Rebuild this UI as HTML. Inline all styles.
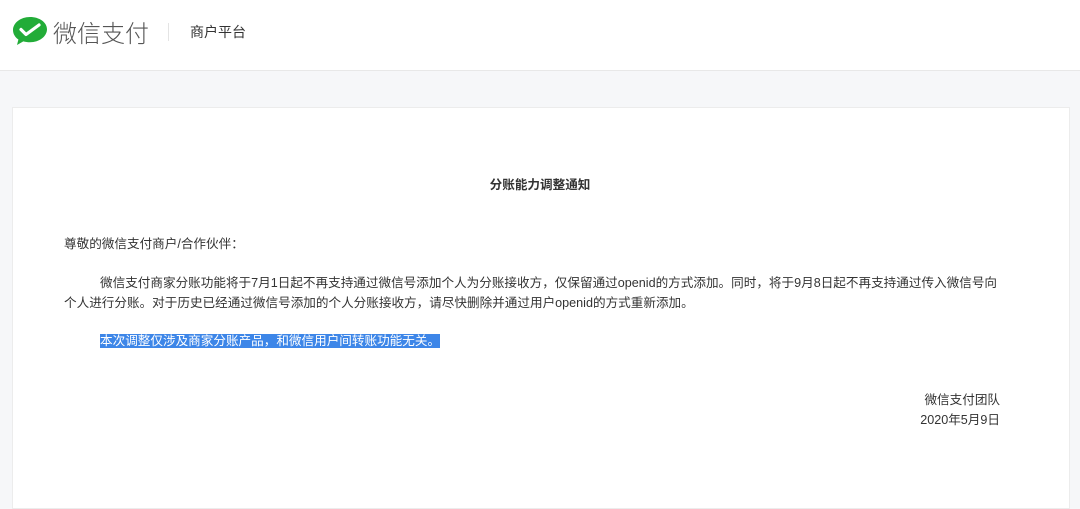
<!DOCTYPE html>
<html><head><meta charset="utf-8"><style>
html,body{margin:0;padding:0;width:1080px;height:494px;overflow:hidden;background:#f6f7f9;font-family:"Liberation Sans","Microsoft YaHei","Noto Sans CJK SC",sans-serif;}
.hd{position:absolute;left:0;top:0;width:1080px;height:70px;background:#fff;border-bottom:1px solid #e8e8e8;}
.logo{position:absolute;left:12px;top:16px;}
.brand{position:absolute;left:53px;top:14px;font-size:24px;color:#555;letter-spacing:0px;font-family:"Noto Sans CJK SC",sans-serif;font-weight:300}
.sep{position:absolute;left:168px;top:23px;width:1px;height:18px;background:#e4e4e4}
.sub{position:absolute;left:190px;top:22px;font-size:14px;color:#333}
.card{position:absolute;left:12px;top:107px;width:1056px;height:400px;background:#fff;border:1px solid #ececec;}
.t{position:absolute;font-size:12.6px;color:#333;white-space:nowrap;line-height:20px}
.hl{background:#3d86e8;color:#fff}
</style></head><body>
<div class="hd">
<svg class="logo" width="36" height="30" viewBox="0 0 36 30"><path d="M18 1C8.6 1 1 7 1 14c0 3.8 2 7.2 5.4 9.5L5 29l6.3-3.6c2.1.6 4.3.9 6.7.9 9.4 0 17-6 17-13S27.4 1 18 1z" fill="#22ac38"/><path d="M9 13.5l5 5L27 9" stroke="#fff" stroke-width="3.2" fill="none" stroke-linecap="round" stroke-linejoin="round"/></svg>
<div class="brand">微信支付</div>
<div class="sep"></div>
<div class="sub">商户平台</div>
</div>
<div class="card"></div>
<div class="t" style="left:0;width:1080px;text-align:center;top:175px;font-weight:bold">分账能力调整通知</div>
<div class="t" style="left:64px;top:234px">尊敬的微信支付商户/合作伙伴：</div>
<div class="t" style="left:100px;top:273px">微信支付商家分账功能将于7月1日起不再支持通过微信号添加个人为分账接收方，仅保留通过openid的方式添加。同时，将于9月8日起不再支持通过传入微信号向</div>
<div class="t" style="left:64px;top:293px">个人进行分账。对于历史已经通过微信号添加的个人分账接收方，请尽快删除并通过用户openid的方式重新添加。</div>
<div class="t" style="left:100px;top:332px;line-height:18px"><span class="hl">本次调整仅涉及商家分账产品，和微信用户间转账功能无关。</span></div>
<div class="t" style="right:80px;top:390px;text-align:right">微信支付团队<br>2020年5月9日</div>
</body></html>
